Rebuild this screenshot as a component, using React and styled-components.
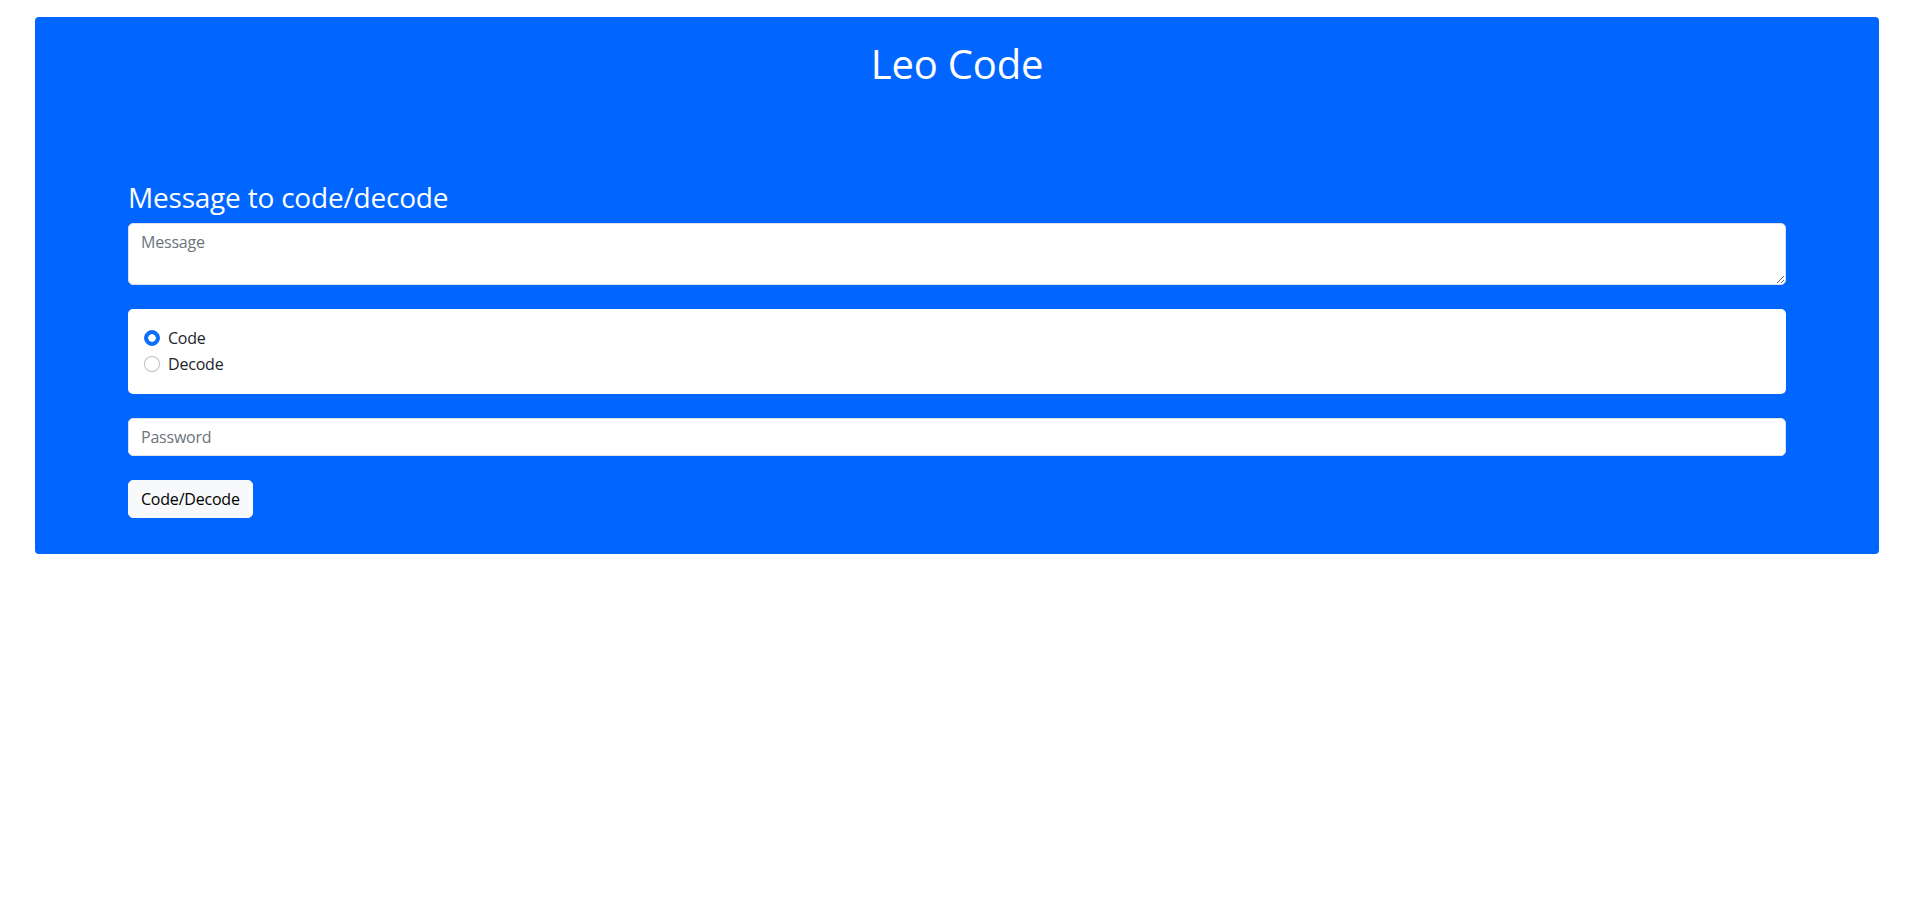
import { useState } from 'react';
import styled, { createGlobalStyle } from 'styled-components';

const GlobalStyle = createGlobalStyle`
    body {
        margin: 0;
        background: #ffffff;
        font-family: 'Open Sans', 'Noto Sans', sans-serif;
        letter-spacing: -0.013em;
        color: #212529;
    }
    * {
        box-sizing: border-box;
    }
`;

const App = () => {
    // 모드 선택 (code / decode)
    const [mode, setMode] = useState('code');
    const [message, setMessage] = useState('');
    const [password, setPassword] = useState('');

    const onSubmitForm = (e) => {
        e.preventDefault();
    };

    return (
        <>
            <GlobalStyle />
            <Panel>
                <Title>Leo Code</Title>
                <Form onSubmit={onSubmitForm}>
                    <Label htmlFor="message">Message to code/decode</Label>
                    <TextArea
                        id="message"
                        rows={2}
                        placeholder="Message"
                        value={message}
                        onChange={(e) => setMessage(e.target.value)}
                    />
                    <RadioBox>
                        <RadioRow>
                            <Radio
                                type="radio"
                                name="mode"
                                checked={mode === 'code'}
                                onChange={() => setMode('code')}
                            />
                            Code
                        </RadioRow>
                        <RadioRow>
                            <Radio
                                type="radio"
                                name="mode"
                                checked={mode === 'decode'}
                                onChange={() => setMode('decode')}
                            />
                            Decode
                        </RadioRow>
                    </RadioBox>
                    <Input
                        type="password"
                        placeholder="Password"
                        value={password}
                        onChange={(e) => setPassword(e.target.value)}
                    />
                    <ButtonRow>
                        <Button type="submit">Code/Decode</Button>
                    </ButtonRow>
                </Form>
            </Panel>
        </>
    );
};

export default App;

const Panel = styled.div`
    margin: 17px 34px 0 35px;
    padding: 23px 93px 36px;
    background: #0066ff;
    border-radius: 4px;
    color: #ffffff;
`;

const Title = styled.h1`
    margin: 0 0 93px;
    font-size: 40px;
    font-weight: 400;
    line-height: 1.2;
    text-align: center;
`;

const Form = styled.form`
    display: flex;
    flex-direction: column;
    gap: 24px;
`;

const Label = styled.label`
    display: block;
    margin-bottom: -16px;
    font-size: 28px;
    font-weight: 400;
    line-height: 1.2;
`;

const fieldStyle = `
    display: block;
    width: 100%;
    padding: 6px 12px;
    font-family: inherit;
    font-size: 16px;
    line-height: 1.5;
    letter-spacing: inherit;
    color: #212529;
    background: #ffffff;
    border: 1px solid #dee2e6;
    border-radius: 5px;
    &::placeholder {
        color: #6c757d;
    }
    &:focus {
        outline: none;
    }
`;

const TextArea = styled.textarea`
    ${fieldStyle}
    height: 62px;
    resize: vertical;
`;

const Input = styled.input`
    ${fieldStyle}
    height: 38px;
`;

const RadioBox = styled.div`
    display: flex;
    flex-direction: column;
    gap: 2px;
    padding: 17px 16px 18px;
    background: #ffffff;
    border-radius: 5px;
    color: #212529;
`;

const RadioRow = styled.label`
    display: flex;
    align-items: center;
    gap: 8px;
    height: 24px;
    font-size: 16px;
    cursor: pointer;
`;

const Radio = styled.input`
    appearance: none;
    flex: none;
    width: 16px;
    height: 16px;
    margin: 0;
    border: 1px solid rgba(0, 0, 0, 0.25);
    border-radius: 50%;
    background: #ffffff;
    cursor: pointer;
    &:checked {
        border-color: #0d6efd;
        background: radial-gradient(circle, #ffffff 0 3.5px, #0d6efd 4px);
    }
`;

const ButtonRow = styled.div`
    display: flex;
`;

const Button = styled.button`
    height: 38px;
    padding: 6px 12px;
    font-family: inherit;
    font-size: 16px;
    line-height: 1.5;
    letter-spacing: inherit;
    color: #000000;
    background: #f8f9fa;
    border: 1px solid #f8f9fa;
    border-radius: 5px;
    cursor: pointer;
`;
